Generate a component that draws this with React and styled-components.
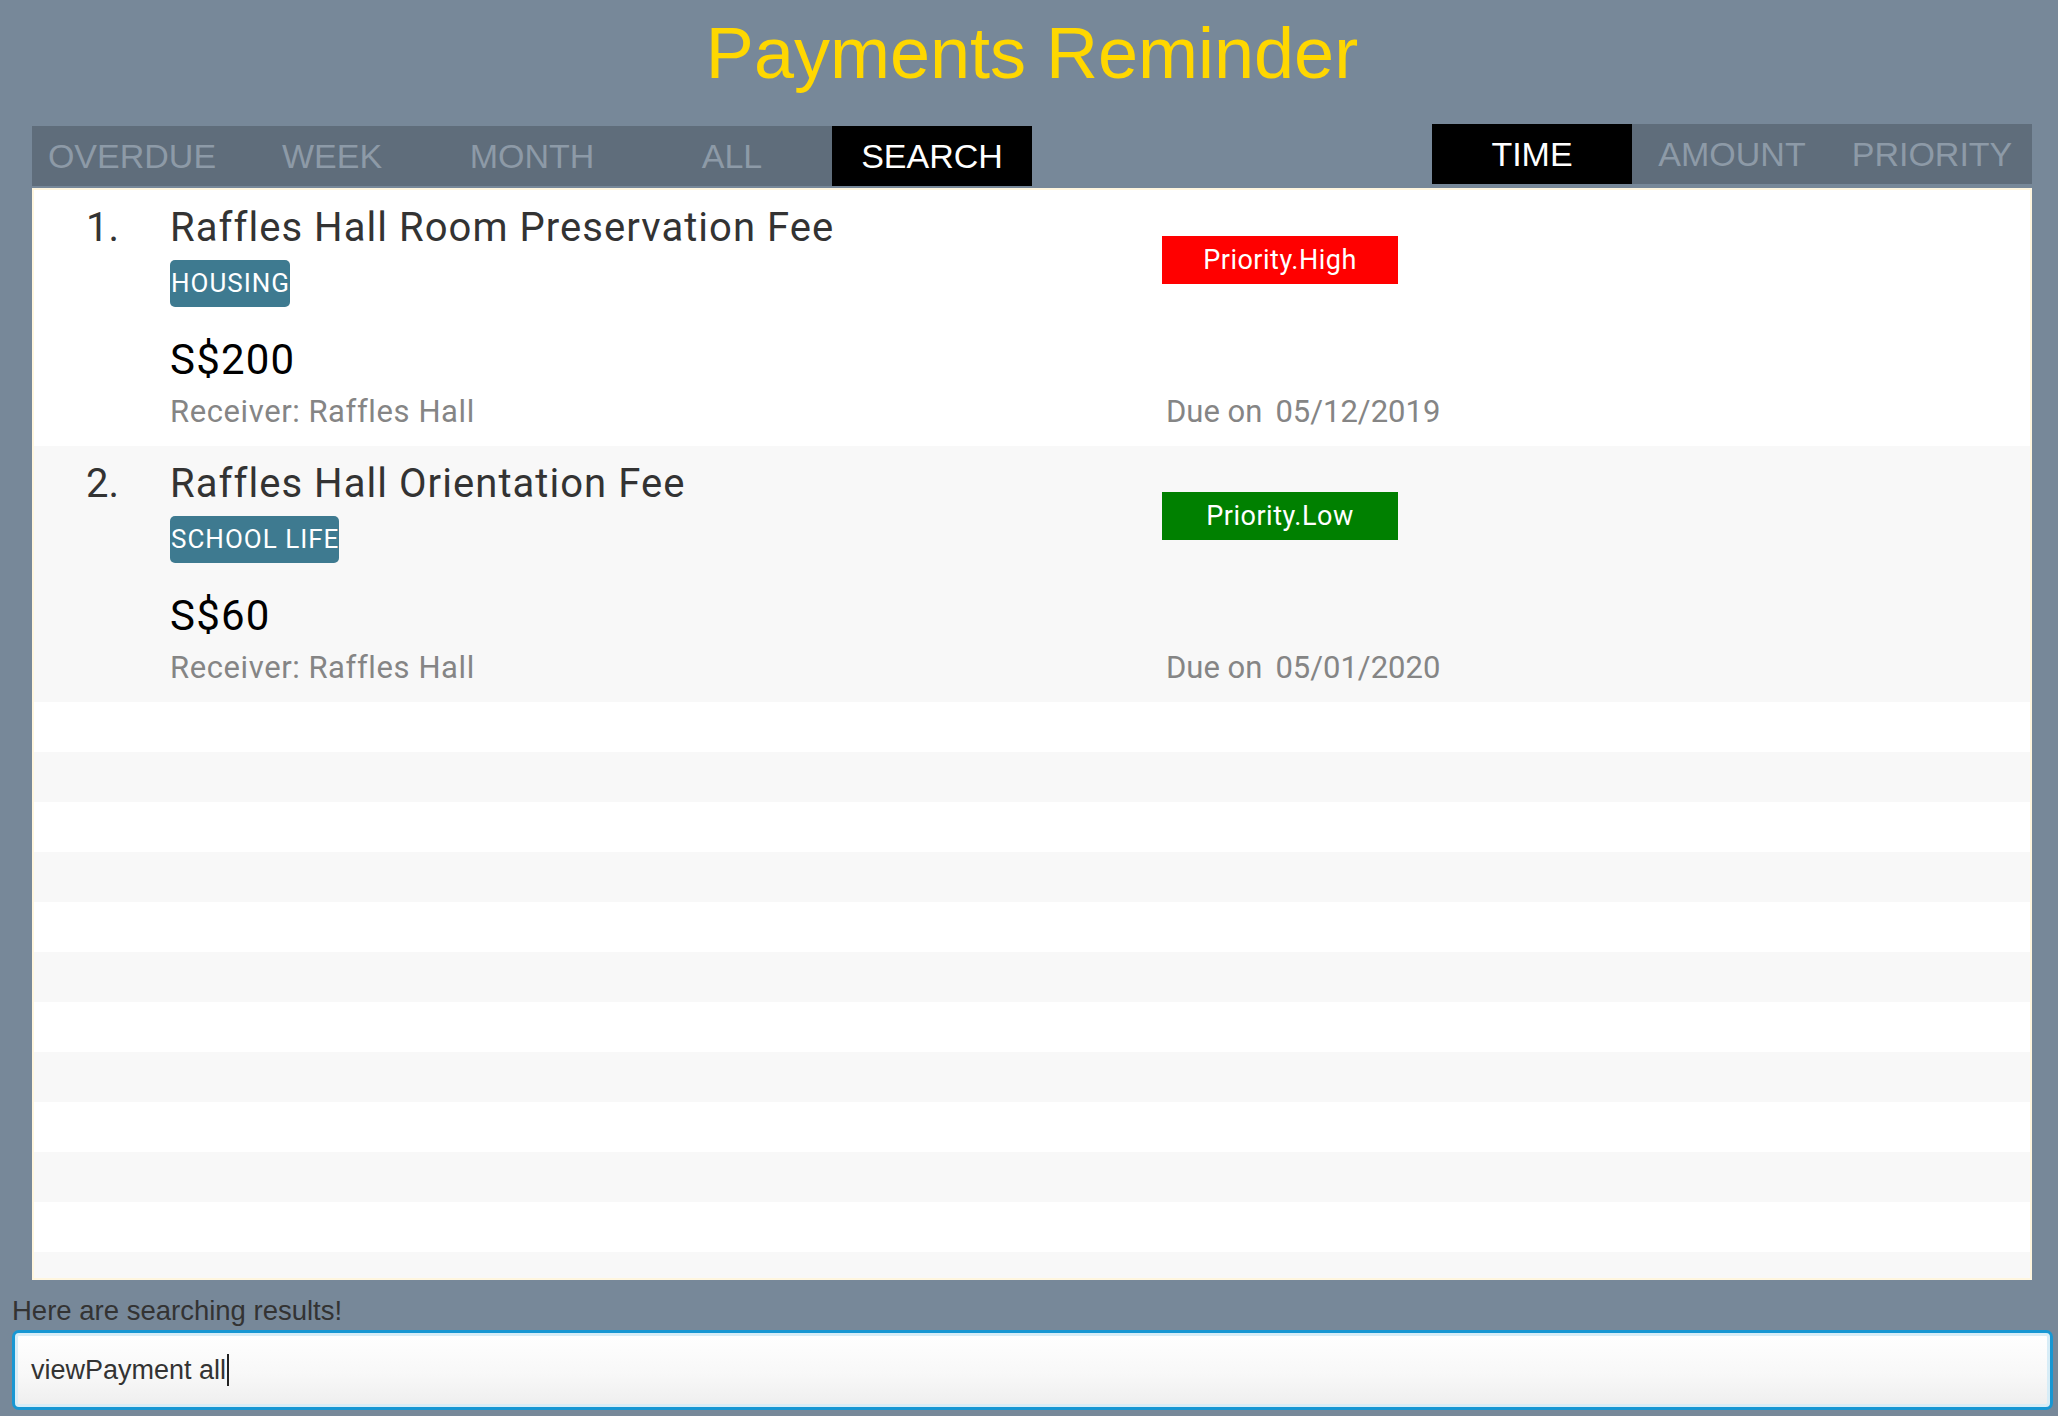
import React from "react";
import styled, { createGlobalStyle } from "styled-components";

const GlobalStyle = createGlobalStyle`
  html, body {
    margin: 0;
    padding: 0;
    height: 100%;
    background: #778899;
  }
  #root {
    height: 100%;
  }
  * {
    box-sizing: border-box;
  }
`;

const Page = styled.div`
  display: flex;
  flex-direction: column;
  height: 100vh;
  width: 100%;
  background: #778899;
  overflow: hidden;
  font-family: "Liberation Sans", Arial, sans-serif;
`;

const Header = styled.header`
  padding: 13px 26px 0 32px;
  text-align: center;
`;

const AppTitle = styled.h1`
  margin: 0;
  font-family: "Liberation Sans", Arial, sans-serif;
  font-weight: 400;
  font-size: 72px;
  line-height: 80px;
  color: #ffd700;
`;

const TabsRow = styled.nav`
  display: flex;
  justify-content: space-between;
  align-items: flex-start;
  margin-top: 31px;
  padding: 0 26px 0 32px;
`;

const TabGroup = styled.div`
  display: flex;
  margin-top: ${(p) => p.$offset || 0}px;
  background: #5f6d7b;
`;

const Tab = styled.div`
  width: 200px;
  height: 60px;
  display: flex;
  align-items: center;
  justify-content: center;
  font-family: "Liberation Sans", Arial, sans-serif;
  font-size: 34px;
  color: ${(p) => (p.$active ? "#ffffff" : "#8d9aa7")};
  background: ${(p) => (p.$active ? "#000000" : "transparent")};
`;

const ListPanel = styled.main`
  flex: 1;
  min-height: 0;
  margin: 2px 26px 0 32px;
  border: 2px solid #fff6df;
  background: #ffffff;
  overflow: hidden;
  display: flex;
  flex-direction: column;
`;

const Row = styled.div`
  flex-shrink: 0;
  display: grid;
  grid-template-columns: 84px 992px 1fr;
  height: 256px;
  padding: 14px 0 0 52px;
  background: ${(p) => (p.$alt ? "#f8f8f8" : "#ffffff")};
  font-family: Roboto, "Noto Sans", sans-serif;
`;

const FillerRow = styled.div`
  flex-shrink: 0;
  height: 50px;
  background: ${(p) => (p.$alt ? "#f8f8f8" : "#ffffff")};
`;

const Index = styled.div`
  font-size: 40px;
  line-height: 48px;
  color: #333333;
`;

const Main = styled.div`
  display: flex;
  flex-direction: column;
  align-items: flex-start;
`;

const Title = styled.div`
  font-size: 40px;
  line-height: 48px;
  letter-spacing: 1.05px;
  color: #333333;
  white-space: nowrap;
`;

const Tag = styled.span`
  margin-top: 8px;
  height: 47px;
  line-height: 47px;
  padding: 0 0 0 1px;
  border-radius: 5px;
  background: #3e7a90;
  color: #ffffff;
  font-size: 26px;
  letter-spacing: 1px;
  white-space: nowrap;
`;

const Amount = styled.div`
  margin-top: 28px;
  font-size: 42px;
  line-height: 50px;
  letter-spacing: 1.2px;
  color: #000000;
`;

const MetaLine = styled.div`
  display: flex;
  gap: ${(p) => p.$gap}px;
  line-height: 36px;
  color: #858585;
  white-space: nowrap;
`;

const Receiver = styled(MetaLine)`
  margin-top: 9px;
  font-size: 31px;
  letter-spacing: 0.6px;
`;

const Side = styled.div`
  display: flex;
  flex-direction: column;
  align-items: flex-start;
  padding: 32px 0 16px 0;
`;

const PriorityBadge = styled.div`
  width: 236px;
  height: 48px;
  line-height: 48px;
  text-align: center;
  font-size: 27px;
  letter-spacing: 0.5px;
  color: #ffffff;
  background: ${(p) => (p.$level === "High" ? "#ff0000" : p.$level === "Low" ? "#008000" : "#ffa500")};
`;

const Due = styled(MetaLine)`
  margin-top: auto;
  padding-left: 4px;
  font-size: 31px;
`;

const Footer = styled.footer`
  padding: 15px 5px 6px 12px;
`;

const Message = styled.div`
  font-family: "Liberation Sans", Arial, sans-serif;
  font-size: 27.5px;
  line-height: 31px;
  color: #333333;
`;

const CommandBox = styled.div`
  margin-top: 4px;
  height: 80px;
  border: 3px solid #1897d3;
  border-radius: 7px;
  padding: 0 16px;
  display: flex;
  align-items: center;
  box-shadow: inset 0 0 0 3px #d8edf7;
  background: linear-gradient(#ffffff, #f8f8f8 55%, #eeeeee);
  font-family: "Liberation Sans", Arial, sans-serif;
  font-size: 27px;
  color: #333333;
`;

const Caret = styled.span`
  display: inline-block;
  width: 2px;
  height: 32px;
  background: #222222;
  margin-left: 1px;
`;

const payments = [
  {
    title: "Raffles Hall Room Preservation Fee",
    tag: "HOUSING",
    amount: "S$200",
    receiver: "Raffles Hall",
    priority: "High",
    due: "05/12/2019",
  },
  {
    title: "Raffles Hall Orientation Fee",
    tag: "SCHOOL LIFE",
    amount: "S$60",
    receiver: "Raffles Hall",
    priority: "Low",
    due: "05/01/2020",
  },
];

const leftTabs = ["OVERDUE", "WEEK", "MONTH", "ALL", "SEARCH"];
const rightTabs = ["TIME", "AMOUNT", "PRIORITY"];

export default function App() {
  return (
    <>
      <GlobalStyle />
      <Page>
        <Header>
          <AppTitle>Payments Reminder</AppTitle>
        </Header>
        <TabsRow>
          <TabGroup $offset={2}>
            {leftTabs.map((t) => (
              <Tab key={t} $active={t === "SEARCH"}>
                {t}
              </Tab>
            ))}
          </TabGroup>
          <TabGroup>
            {rightTabs.map((t) => (
              <Tab key={t} $active={t === "TIME"}>
                {t}
              </Tab>
            ))}
          </TabGroup>
        </TabsRow>
        <ListPanel>
          {payments.map((p, i) => (
            <Row key={p.title} $alt={i % 2 === 1}>
              <Index>{i + 1}.</Index>
              <Main>
                <Title>{p.title}</Title>
                <Tag>{p.tag}</Tag>
                <Amount>{p.amount}</Amount>
                <Receiver $gap={8}>
                  <span>Receiver:</span>
                  <span>{p.receiver}</span>
                </Receiver>
              </Main>
              <Side>
                <PriorityBadge $level={p.priority}>Priority.{p.priority}</PriorityBadge>
                <Due $gap={13}>
                  <span>Due on</span>
                  <span>{p.due}</span>
                </Due>
              </Side>
            </Row>
          ))}
          {Array.from({ length: 14 }).map((_, i) => (
            <FillerRow key={i} $alt={(i + payments.length) % 2 === 1} />
          ))}
        </ListPanel>
        <Footer>
          <Message>Here are searching results!</Message>
          <CommandBox>
            viewPayment all
            <Caret />
          </CommandBox>
        </Footer>
      </Page>
    </>
  );
}
